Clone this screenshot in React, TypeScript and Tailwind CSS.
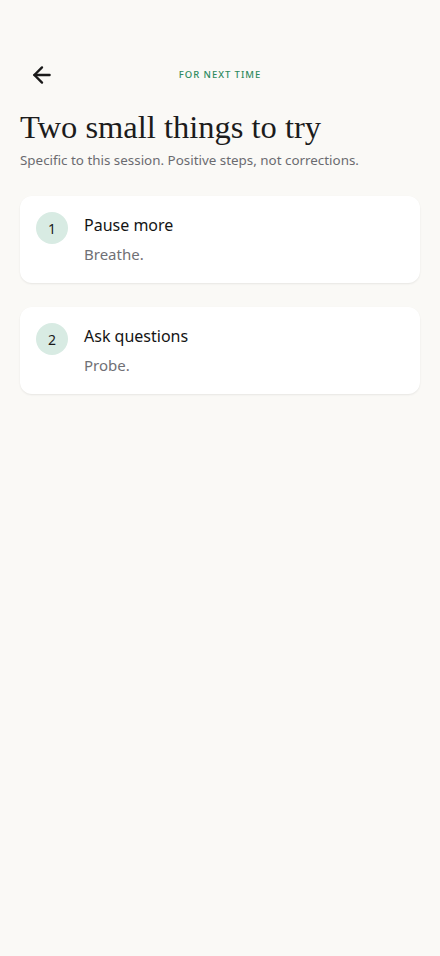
import React from "react";
import { ArrowLeft } from "lucide-react";

const items = [
  { n: 1, title: "Pause more", sub: "Breathe." },
  { n: 2, title: "Ask questions", sub: "Probe." },
];

export default function App() {
  return (
    <div
      className="min-h-[956px] w-full bg-[#faf9f6] text-[#1a1a1a]"
      style={{ fontFamily: '"Noto Sans", "Open Sans", sans-serif' }}
    >
      <div className="px-5 pt-[58px]">
        <div className="relative flex h-[34px] items-center">
          <button className="flex h-[34px] w-[44px] items-center justify-start pl-[9px] text-[#1a1a1a]">
            <ArrowLeft size={26} strokeWidth={2.2} />
          </button>
          <div className="absolute inset-x-0 text-center text-[9.5px] font-medium tracking-[0.1em] text-[#2e8a5e]">
            FOR NEXT TIME
          </div>
        </div>
        <h1
          className="mt-[16px] text-[32.5px] leading-[38px] text-[#1c1c1c]"
          style={{ fontFamily: '"Liberation Serif", "DejaVu Serif", serif' }}
        >
          Two small things to try
        </h1>
        <p className="mt-[4px] text-[13.4px] leading-[20px] text-[#6b6b70]">
          Specific to this session. Positive steps, not corrections.
        </p>
        <div className="mt-[26px] flex flex-col gap-6">
          {items.map((it) => (
            <div
              key={it.n}
              className="flex gap-4 rounded-[12px] bg-white px-4 pb-[17px] pt-4 shadow-[0_1px_2px_rgba(0,0,0,0.08)]"
            >
              <div className="flex h-8 w-8 shrink-0 items-center justify-center rounded-full bg-[#d8ebe3] text-[14px] text-[#1a1a1a]">
                {it.n}
              </div>
              <div className="flex flex-col">
                <div className="text-[16px] leading-[26px] text-[#141414]">{it.title}</div>
                <div className="mt-[4px] text-[15px] leading-[24px] text-[#707075]">{it.sub}</div>
              </div>
            </div>
          ))}
        </div>
      </div>
    </div>
  );
}
